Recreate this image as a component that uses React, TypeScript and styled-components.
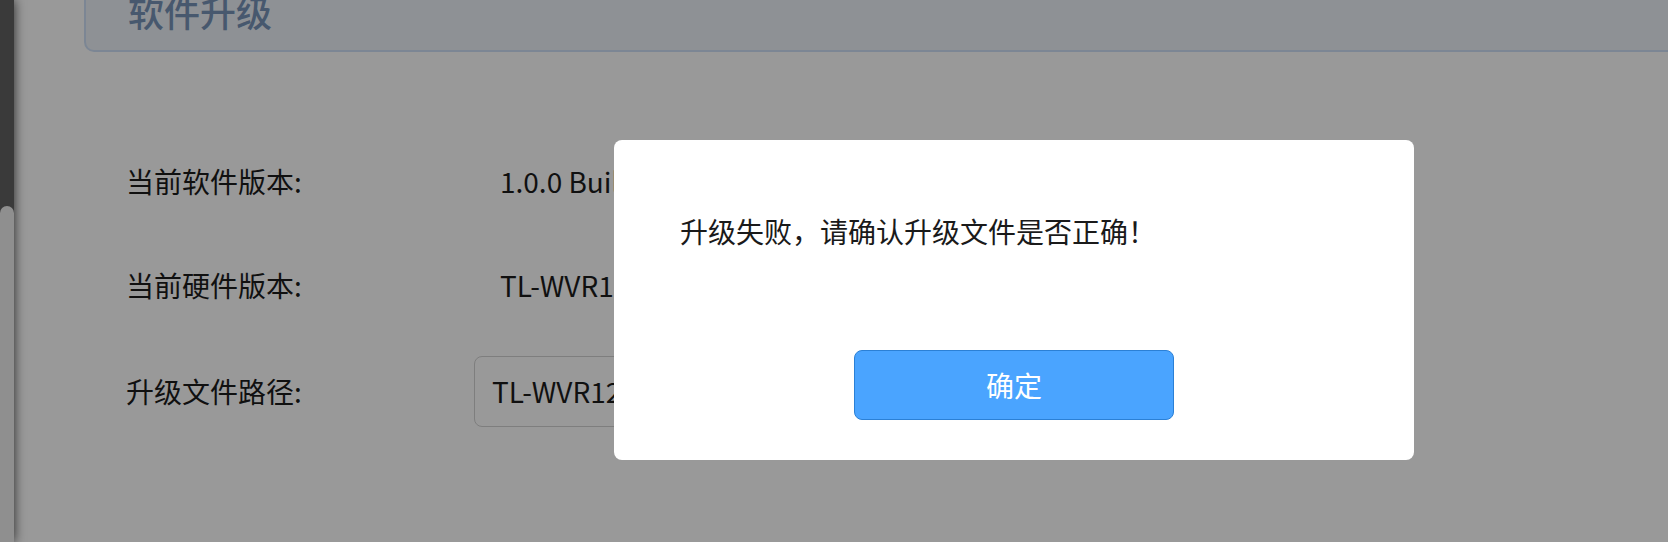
import React from "react";
import styled, { createGlobalStyle } from "styled-components";

const GlobalStyle = createGlobalStyle`
  html, body {
    margin: 0;
    padding: 0;
    width: 1668px;
    height: 542px;
    overflow: hidden;
    background: #ffffff;
    font-family: "Noto Sans CJK SC", "Noto Sans", sans-serif;
  }
  * { box-sizing: border-box; }
`;

const Shell = styled.div`
  display: flex;
  height: 542px;
  width: 1668px;
  overflow: hidden;
`;

const Sidebar = styled.aside`
  position: relative;
  z-index: 1;
  flex: 0 0 14px;
  display: flex;
  flex-direction: column;
  padding-top: 56px;
  background: #616161;
  box-shadow: 0 0 12px rgba(0, 0, 0, 0.75);
`;

const Thumb = styled.div`
  flex: 1;
  margin-top: 150px;
  background: #eeeeee;
  border-radius: 7px 7px 0 0;
`;

const Main = styled.main`
  flex: 1;
  padding-left: 70px;
  background: #ffffff;
`;

const Header = styled.header`
  margin-top: -20px;
  margin-right: -24px;
  height: 72px;
  display: flex;
  align-items: flex-end;
  padding: 0 0 21px 42px;
  background: #edf2f8;
  border: 2px solid #cfe0f7;
  border-radius: 10px;
`;

const Title = styled.h1`
  margin: 0;
  font-size: 36px;
  line-height: 36px;
  font-weight: 500;
  color: #7793b7;
`;

const Form = styled.section`
  display: flex;
  flex-direction: column;
  padding: 77px 0 0 42px;
`;

const Row = styled.div<{ $offset?: number }>`
  display: flex;
  align-items: center;
  height: 104px;
  margin-top: ${(p) => p.$offset ?? 0}px;
`;

const Label = styled.span`
  flex: 0 0 348px;
  font-size: 28px;
  line-height: 40px;
  color: #1c1c1c;
`;

const Value = styled.span`
  padding-left: 26px;
  font-size: 28px;
  line-height: 40px;
  color: #1c1c1c;
  white-space: nowrap;
`;

const FileInput = styled.div`
  width: 620px;
  height: 71px;
  display: flex;
  align-items: center;
  padding-left: 17px;
  border: 1.5px solid #d2d2d2;
  border-radius: 8px;
  font-size: 28px;
  color: #1c1c1c;
  white-space: nowrap;
  overflow: hidden;
`;

const Mask = styled.div`
  position: fixed;
  inset: 0;
  z-index: 10;
  background: rgba(0, 0, 0, 0.4);
`;

const Dialog = styled.div`
  position: absolute;
  left: 614px;
  top: 140px;
  width: 800px;
  height: 320px;
  display: flex;
  flex-direction: column;
  padding: 71px 66px 40px;
  background: #ffffff;
  border-radius: 8px;
`;

const Message = styled.p`
  flex: 1;
  margin: 0;
  font-size: 28px;
  line-height: 40px;
  color: #1a1a1a;
`;

const Footer = styled.div`
  display: flex;
  justify-content: center;
`;

const ConfirmButton = styled.button`
  width: 320px;
  height: 70px;
  background: #4aa4ff;
  border: 1.5px solid #2b80d6;
  border-radius: 8px;
  color: #ffffff;
  font-family: "Noto Sans CJK SC", "Noto Sans", sans-serif;
  font-size: 28px;
  cursor: pointer;
`;

export default function App() {
  return (
    <>
      <GlobalStyle />
      <Shell>
        <Sidebar>
          <Thumb />
        </Sidebar>
        <Main>
          <Header>
            <Title>软件升级</Title>
          </Header>
          <Form>
            <Row>
              <Label>当前软件版本:</Label>
              <Value>1.0.0 Build 180518 Rel.58713n</Value>
            </Row>
            <Row>
              <Label>当前硬件版本:</Label>
              <Value>TL-WVR1200L 2.0</Value>
            </Row>
            <Row $offset={2}>
              <Label>升级文件路径:</Label>
              <FileInput>TL-WVR1200Lv2.0_up.bin</FileInput>
            </Row>
          </Form>
        </Main>
      </Shell>
      <Mask>
        <Dialog role="dialog">
          <Message>升级失败，请确认升级文件是否正确！</Message>
          <Footer>
            <ConfirmButton>确定</ConfirmButton>
          </Footer>
        </Dialog>
      </Mask>
    </>
  );
}
